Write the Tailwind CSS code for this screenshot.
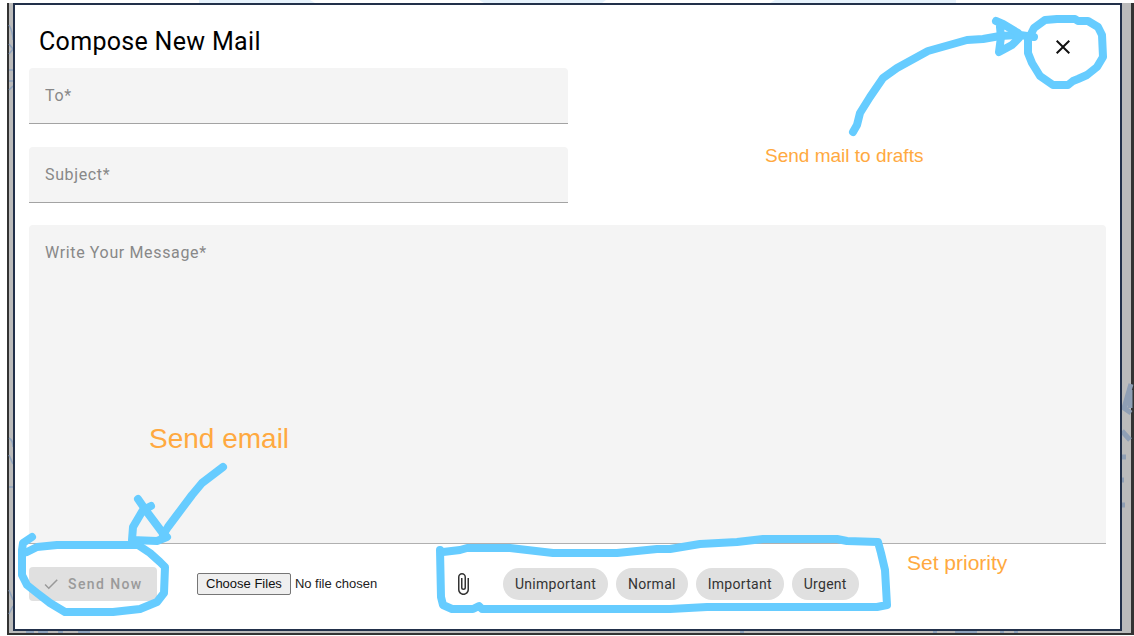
<!DOCTYPE html>
<html lang="en">
<head>
<meta charset="utf-8">
<meta name="viewport" content="width=device-width, initial-scale=1">
<title>Compose New Mail</title>
<script src="https://cdn.jsdelivr.net/npm/@tailwindcss/browser@4"></script>
</head>
<body class="relative flex min-h-screen flex-col bg-white pl-[7px] pb-px font-[Roboto,sans-serif] text-black">
  <!-- Page behind the dialog -->
  <svg class="absolute top-0 left-0" width="1134" height="3" aria-hidden="true" fill="#e6f2fc"><path d="M199 0H310L315 3H199zM479 0H606L602 3H484zM775 0H956V3H770z"/></svg>
  <div class="h-[3px] shrink-0"></div>
  <div class="relative flex flex-1 flex-col border-r-3 border-b-2 border-l-2 border-[#333333] bg-[#bbbbbb] pr-[9px] pb-[2px] pl-[4px]">
    <svg class="absolute top-0 -left-[9px]" width="1134" height="633" viewBox="0 3 1134 633" aria-hidden="true" fill="none" stroke="#8fa3bd" stroke-width="1.5">
      <path d="M9 25Q13 32 13 40M9 44l4 5M9 54l4-5M9 70h4M9 81h4M9 90l4-4M9 438q4 2 4 9M9 455l4 9M9 487h4M9 590l4 10M9 614l4-8"/>
      <path stroke="#8f9fb5" stroke-width="5" d="M1131 384L1124 408L1131 413M1130 390V408M1122 431L1130 440M1122 457h4M1122 480h2M1122 505h3"/>
      <path stroke-width="2" d="M26 632h8M38 632h10M58 632h5M78 632h12M740 632h4M933 632h4M955 632h22M1000 632h4M1014 632h4"/>
    </svg>
    <main class="relative flex flex-1 flex-col border-2 border-[#22304a] bg-white px-[14px] pb-[28px]">
      <header class="flex items-center justify-between pr-[31px] pl-[10px]">
        <h1 class="mt-[21px] mb-[10px] text-[25px] leading-8 tracking-[0.0125em]">Compose New Mail</h1>
        <button type="button" aria-label="Close" class="mt-5 flex size-6 items-center justify-center">
          <svg width="24" height="24" viewBox="0 0 24 24" aria-hidden="true"><path fill="#111" d="M19 6.4 17.6 5 12 10.6 6.4 5 5 6.4 10.6 12 5 17.6 6.4 19 12 13.4 17.6 19 19 17.6 13.4 12z"/></svg>
        </button>
      </header>
      <form class="flex flex-1 flex-col">
        <input type="text" aria-label="To" placeholder="To*" class="mb-[23px] h-14 w-1/2 rounded-t border-b border-[#a3a3a3] bg-[#f4f4f4] px-4 text-base tracking-[0.04em] placeholder:text-[#888888]">
        <input type="text" aria-label="Subject" placeholder="Subject*" class="mb-[22px] h-14 w-1/2 rounded-t border-b border-[#a3a3a3] bg-[#f4f4f4] px-4 text-base tracking-[0.04em] placeholder:text-[#888888]">
        <textarea aria-label="Write Your Message" placeholder="Write Your Message*" class="w-full flex-1 resize-none rounded-t border-b border-[#b0b0b0] bg-[#f4f4f4] px-4 py-4 text-base tracking-[0.04em] placeholder:text-[#888888]"></textarea>
        <div class="mt-[23px] flex h-[34px] items-center">
          <button type="submit" disabled class="flex h-full w-32 items-center gap-2 rounded bg-[#e0e0e0] pl-[13px] text-sm font-medium tracking-widest whitespace-nowrap text-[#9a9a9a]">
            <svg width="18" height="18" viewBox="0 0 24 24" aria-hidden="true"><path fill="#999" d="M9 16.2 4.8 12l-1.4 1.4L9 19 21 7l-1.4-1.4z"/></svg>
            Send Now
          </button>
          <input type="file" multiple aria-label="Attachments" class="ml-10 w-[254px] font-['Liberation_Sans',sans-serif] text-[13px] text-[#222222] file:mr-1 file:h-[22px] file:rounded-[2px] file:border file:border-solid file:border-[#767676] file:bg-[#efefef] file:px-2 file:text-[13px] file:text-[#111111]">
          <svg class="shrink-0" width="24" height="24" viewBox="0 0 24 24" aria-hidden="true"><path fill="#333" d="M16.5 6v11.5c0 2.21-1.79 4-4 4s-4-1.79-4-4V5a2.5 2.5 0 0 1 5 0v10.5c0 .55-.45 1-1 1s-1-.45-1-1V6H10v9.5a2.5 2.5 0 0 0 5 0V5c0-2.21-1.79-4-4-4S7 2.79 7 5v12.5c0 3.04 2.46 5.5 5.5 5.5s5.5-2.46 5.5-5.5V6z"/></svg>
          <div class="ml-7 flex gap-2 text-sm text-[#333333]" role="group" aria-label="Priority">
            <button type="button" class="h-8 rounded-full bg-[#e0e0e0] px-3 tracking-[0.02em]">Unimportant</button>
            <button type="button" class="h-8 rounded-full bg-[#e0e0e0] px-3 tracking-[0.02em]">Normal</button>
            <button type="button" class="h-8 rounded-full bg-[#e0e0e0] px-3 tracking-[0.02em]">Important</button>
            <button type="button" class="h-8 rounded-full bg-[#e0e0e0] px-3 tracking-[0.02em]">Urgent</button>
          </div>
        </div>
      </form>
    </main>
  </div>

  <!-- Hand-drawn annotations -->
  <div class="pointer-events-none absolute top-0 left-0 h-[636px] w-[1134px] font-['Liberation_Sans',sans-serif] text-xl leading-6 text-[#ffa940]">
    <svg class="absolute inset-0" width="1134" height="636" viewBox="0 0 1134 636" aria-hidden="true" fill="none" stroke="#66ccff" stroke-width="8" stroke-linecap="round" stroke-linejoin="round">
      <path d="M853 132L857 125L860 113L870 97L883 78L897 68L928 51L967 40L983 39L1000 36L1020 35L1034 37"/>
      <path d="M996 21L1003 24L1018 33L1019 38L1012 45L999 52L1001 37L1000 27"/>
      <path d="M1028 53L1028 40L1034 28L1045 20L1057 19H1075L1078 21L1088 21L1098 27L1102 35L1103 57L1097 67L1087 75L1078 79L1073 81L1068 85H1053L1040 76L1032 63Z"/>
      <path d="M223 467L202 483L192 495L177 515L168 527L163 535"/>
      <path d="M138 499L147 512L162 532L167 537L157 541L132 540L133 527L143 510L151 506"/>
      <path d="M32 537L23 543L22 550V575L27 585L37 593L50 603L65 612H113L140 609L157 602L164 593L165 567L160 562L150 553L138 545H57L37 547L27 552"/>
      <path d="M440 550L441 597L443 605L452 609H473L479 606L482 609H670L707 607H877L887 605L885 570L881 553L878 542L847 541L837 539H763L737 542L700 544L670 549H657L617 553H553L510 548H467L460 550L443 552"/>
    </svg>
    <p class="absolute top-[144px] left-[765px] text-[19px]">Send mail to drafts</p>
    <p class="absolute top-[423px] left-[149px] text-[28px] leading-8">Send email</p>
    <p class="absolute top-[551px] left-[907px] text-[21px]">Set priority</p>
  </div>
</body>
</html>
